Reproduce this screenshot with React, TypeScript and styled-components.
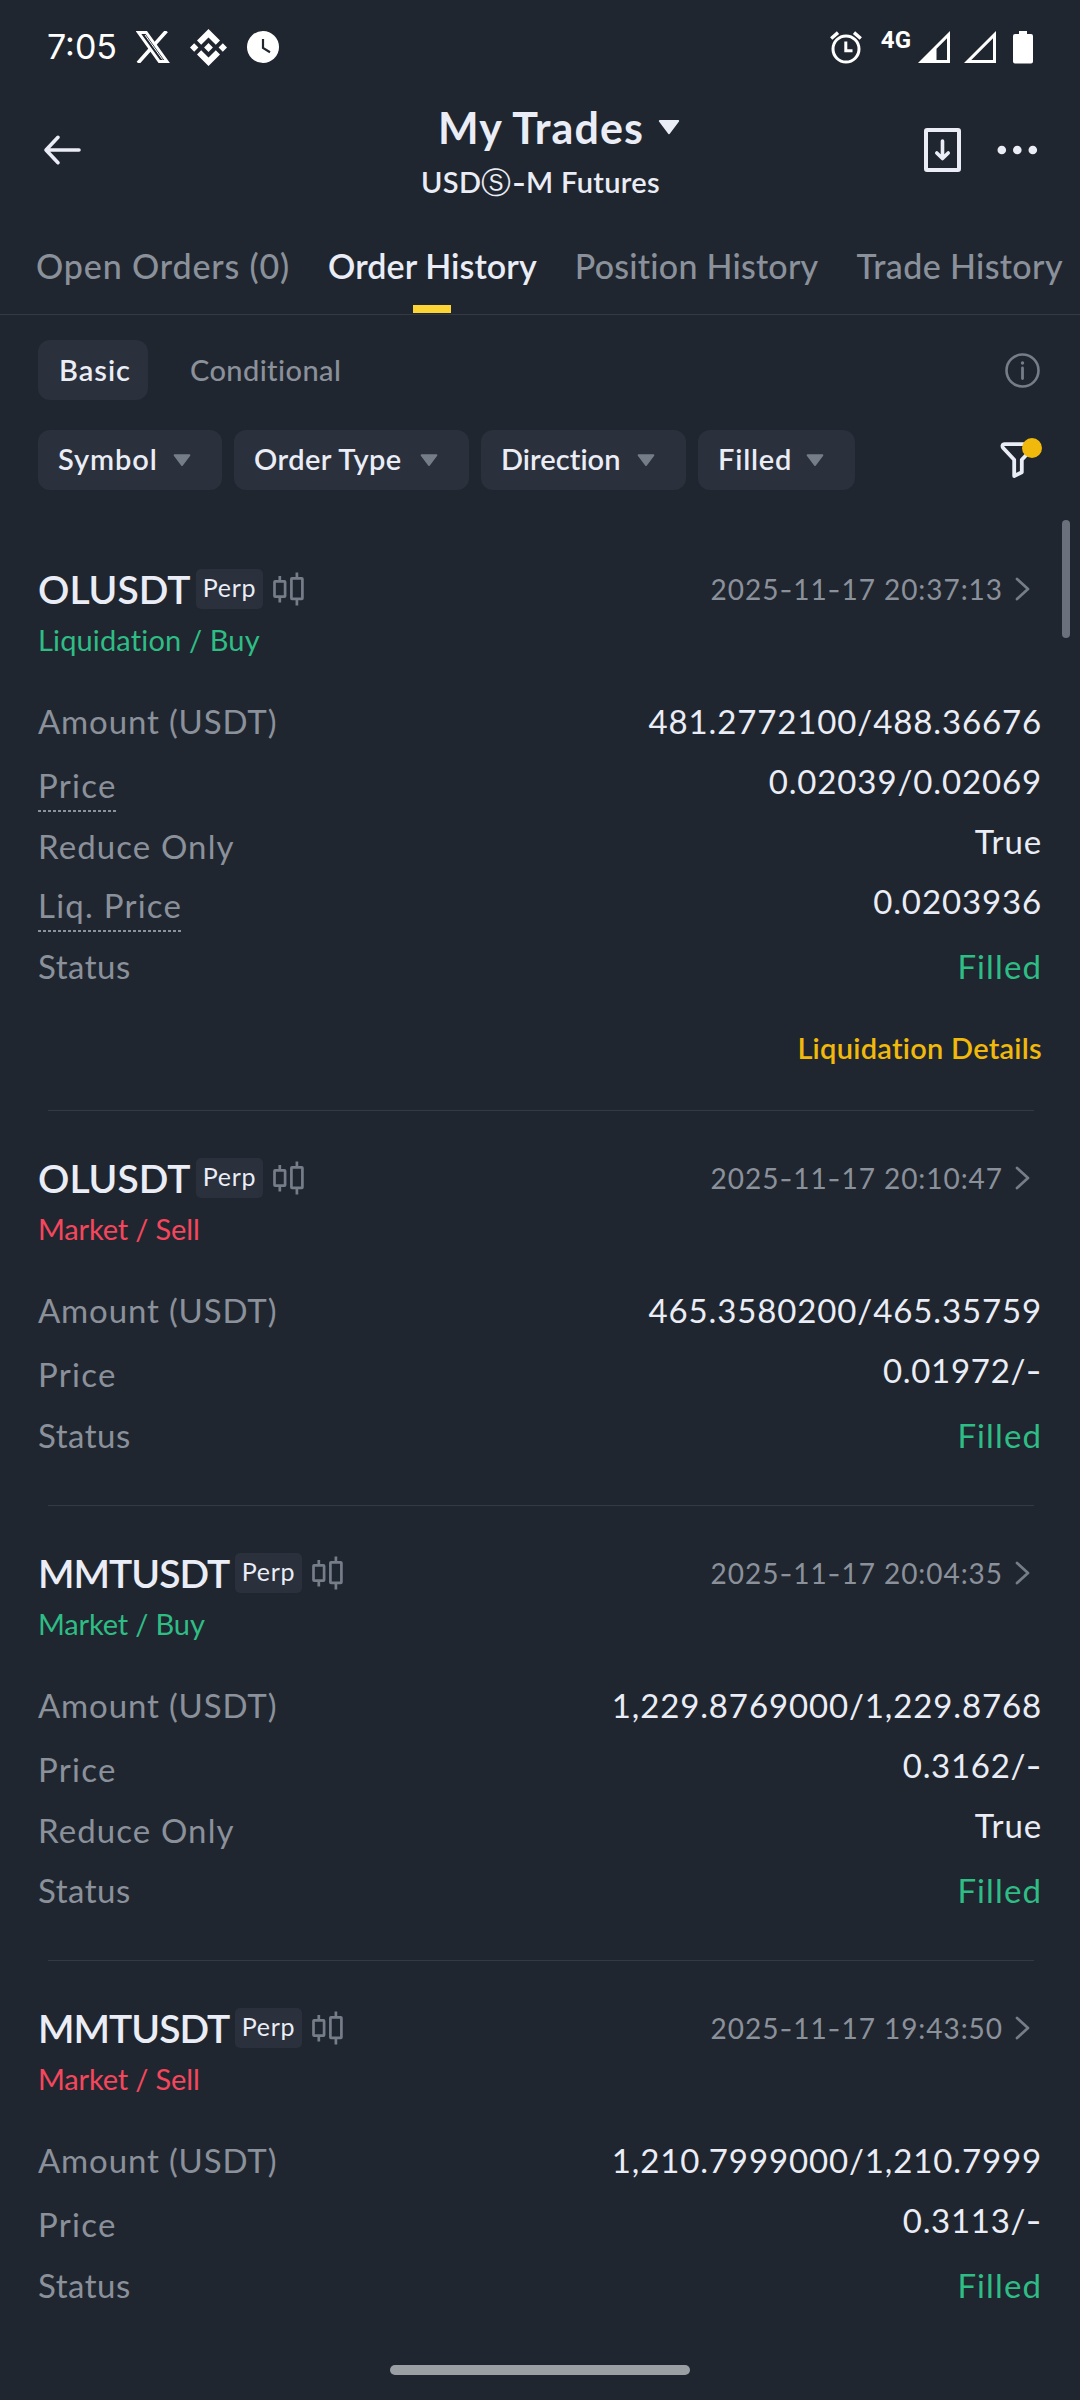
import React from "react";
import styled, { createGlobalStyle } from "styled-components";

const color = {
  bg: "#20262f",
  panel: "#2a303c",
  text: "#eaedf6",
  muted: "#8b919b",
  icon: "#757d89",
  line: "#343943",
  green: "#2ebd85",
  red: "#f6465d",
  yellow: "#f0b90b",
};

const GlobalStyle = createGlobalStyle`
  *, *::before, *::after { box-sizing: border-box; }
  body {
    margin: 0;
    background: ${color.bg};
    font-family: Lato, "Open Sans", sans-serif;
    color: ${color.text};
  }
  svg { display: block; flex: none; }
`;

const Screen = styled.div`
  width: 1080px;
  height: 2400px;
  overflow: hidden;
  display: flex;
  flex-direction: column;
  background: ${color.bg};
`;

/* ---------- status bar ---------- */

const StatusBar = styled.div`
  height: 94px;
  flex: none;
  display: flex;
  align-items: center;
  justify-content: space-between;
  padding: 0 47px 0 47px;
  color: #fff;
`;

const StatusLeft = styled.div`
  display: flex;
  align-items: center;
`;

const StatusRight = styled.div`
  display: flex;
  align-items: flex-start;
  height: 32px;
`;

const Clock = styled.span`
  width: 89px;
  font: 400 34px/40px Inter, sans-serif;
`;

const IconSlot = styled.span<{ $gap: number }>`
  margin-left: ${(p) => p.$gap}px;
`;

const NetworkType = styled.span`
  margin-left: 19px;
  font: 700 24px/18px Roboto, sans-serif;
`;

/* ---------- header ---------- */

const Header = styled.header`
  height: 111px;
  flex: none;
  display: grid;
  grid-template-columns: 1fr auto 1fr;
  align-items: center;
  padding: 0 42px 0 43px;
`;

const Heading = styled.div`
  align-self: start;
  padding-top: 9px;
  display: flex;
  flex-direction: column;
  align-items: center;
`;

const TitleRow = styled.div`
  display: flex;
  align-items: center;
  gap: 14px;
  padding-left: 37px;
  & > svg { margin-bottom: 2px; }
`;

const Title = styled.h1`
  margin: 0;
  font-size: 43px;
  line-height: 50px;
  font-weight: 700;
  letter-spacing: 1.1px;
`;

const Subtitle = styled.div`
  margin-top: 9px;
  font-size: 29px;
  line-height: 40px;
  font-weight: 600;
  letter-spacing: 0.3px;
  white-space: nowrap;
`;

const CircledS = styled.span`
  font-family: "DejaVu Sans", sans-serif;
  font-weight: 400;
  font-size: 30px;
  line-height: 1px;
  letter-spacing: 1px;
`;

const Dash = styled.span`
  font-family: Inter, sans-serif;
  line-height: 1px;
`;

const HeaderActions = styled.div`
  display: flex;
  align-items: center;
  justify-content: flex-end;
  gap: 36px;
`;

/* ---------- tabs ---------- */

const Tabs = styled.nav`
  height: 110px;
  flex: none;
  display: flex;
  align-items: flex-start;
  gap: 38px;
  padding: 41px 0 0 36px;
  border-bottom: 1px solid ${color.line};
`;

const Tab = styled.div<{ $active?: boolean; $track: number }>`
  display: flex;
  flex-direction: column;
  align-items: center;
  gap: 19px;
  font-size: 34px;
  line-height: 40px;
  font-weight: ${(p) => (p.$active ? 600 : 500)};
  letter-spacing: ${(p) => p.$track}px;
  white-space: nowrap;
  color: ${(p) => (p.$active ? color.text : color.muted)};
  &::after {
    content: "";
    width: 38px;
    height: 8px;
    background: ${(p) => (p.$active ? "#fcd535" : "transparent")};
  }
`;

/* ---------- filters ---------- */

const ModeRow = styled.div`
  flex: none;
  height: 60px;
  margin-top: 25px;
  padding: 0 40px 0 38px;
  display: flex;
  align-items: center;
  justify-content: space-between;
`;

const ModeGroup = styled.div`
  display: flex;
`;

const Mode = styled.div<{ $active?: boolean }>`
  height: 60px;
  min-width: 110px;
  padding-left: ${(p) => (p.$active ? 21 : 42)}px;
  border-radius: 12px;
  font-size: 29px;
  line-height: 60px;
  font-weight: ${(p) => (p.$active ? 600 : 500)};
  letter-spacing: ${(p) => (p.$active ? 1.0 : 0.4)}px;
  color: ${(p) => (p.$active ? color.text : color.muted)};
  background: ${(p) => (p.$active ? color.panel : "transparent")};
`;

const FilterRow = styled.div`
  flex: none;
  height: 60px;
  margin-top: 30px;
  padding: 0 38px;
  display: flex;
  align-items: center;
  justify-content: space-between;
`;

const ChipGroup = styled.div`
  display: flex;
  gap: 12px;
`;

const Chip = styled.div<{ $width: number; $track: number }>`
  width: ${(p) => p.$width}px;
  height: 60px;
  padding: 0 31px 0 20px;
  border-radius: 12px;
  display: flex;
  align-items: center;
  justify-content: space-between;
  font-size: 29px;
  line-height: 56px;
  font-weight: 600;
  letter-spacing: ${(p) => p.$track}px;
  white-space: nowrap;
  background: ${color.panel};
  & > span { padding-bottom: 3px; }
`;

const FilterButton = styled.div`
  position: relative;
  width: 42px;
  height: 42px;
  margin-bottom: 2px;
  &::after {
    content: "";
    position: absolute;
    top: 0;
    right: 0;
    width: 20px;
    height: 20px;
    border-radius: 50%;
    background: ${color.yellow};
  }
`;

/* ---------- orders ---------- */

const OrderList = styled.main`
  position: relative;
  flex: 1;
  padding-top: 32px;
`;

const ScrollThumb = styled.div`
  position: absolute;
  top: 30px;
  right: 10px;
  width: 8px;
  height: 118px;
  border-radius: 4px;
  background: #6a717d;
`;

const Card = styled.section`
  padding: 43px 38px 50px 38px;
`;

const Divider = styled.hr`
  height: 1px;
  margin: 0 46px 0 48px;
  border: 0;
  background: ${color.line};
`;

const CardHead = styled.div`
  display: flex;
  align-items: center;
  height: 48px;
`;

const Symbol = styled.h2<{ $width: number; $track: number }>`
  margin: 0;
  width: ${(p) => p.$width}px;
  font-size: 39px;
  line-height: 48px;
  font-weight: 600;
  letter-spacing: ${(p) => p.$track}px;
  white-space: nowrap;
`;

const Badge = styled.span`
  width: 67px;
  height: 40px;
  margin-right: 10px;
  border-radius: 5px;
  text-align: center;
  font-size: 25px;
  line-height: 36px;
  letter-spacing: 0.7px;
  background: ${color.panel};
`;

const Stamp = styled.div`
  margin-left: auto;
  padding: 0 12px 0 0;
  display: flex;
  align-items: center;
  gap: 12px;
  font-size: 28px;
  line-height: 48px;
  letter-spacing: 0.95px;
  color: ${color.muted};
`;

const Side = styled.div<{ $buy: boolean; $track: number }>`
  margin: 9px 0 43px;
  font-size: 29px;
  line-height: 36px;
  letter-spacing: ${(p) => p.$track}px;
  color: ${(p) => (p.$buy ? color.green : color.red)};
`;

const Row = styled.div<{ $last?: boolean }>`
  display: flex;
  justify-content: space-between;
  align-items: flex-start;
  height: ${(p) => (p.$last ? 40 : 60)}px;
  margin-top: ${(p) => (p.$last ? 5 : 0)}px;
  font-size: 33px;
  line-height: 40px;
`;

const Label = styled.span<{ $drop: number; $hint?: boolean; $track: number }>`
  margin-top: ${(p) => p.$drop}px;
  height: ${(p) => (p.$hint ? 47 : 40)}px;
  letter-spacing: ${(p) => p.$track}px;
  color: ${color.muted};
  background: ${(p) =>
    p.$hint
      ? `repeating-linear-gradient(90deg, ${color.muted} 0 3px, transparent 3px 5px) 0 100% / 100% 2px no-repeat`
      : "none"};
`;

const Value = styled.span<{ $track: number; $green?: boolean }>`
  letter-spacing: ${(p) => p.$track}px;
  color: ${(p) => (p.$green ? color.green : color.text)};
`;

const DetailsLink = styled.a`
  display: block;
  margin: 50px 0 0;
  text-align: right;
  font-size: 29px;
  line-height: 24px;
  font-weight: 600;
  letter-spacing: 0.26px;
  color: ${color.yellow};
`;

const HomeBar = styled.div`
  position: absolute;
  left: 390px;
  bottom: 25px;
  width: 300px;
  height: 10px;
  border-radius: 5px;
  background: #9a9fa4;
`;

/* ---------- icons ---------- */

const XLogo = () => (
  <svg width="34" height="32" viewBox="0 0 34 32" fill="none">
    <path d="M2.5 1.5H10.2L31 30.5H23.3Z" stroke="#fff" strokeWidth="3" />
    <path d="M30.5 0L18.6 13.4M14.2 18.3L2 32" stroke="#fff" strokeWidth="3.6" />
    <path d="M9 4L26.5 28.5" stroke="#fff" strokeWidth="1" />
  </svg>
);

const BinanceLogo = () => (
  <svg width="37" height="37" viewBox="0 0 37 37" fill="#fff">
    <path d="M18.5 0L30 11.5L25.8 15.7L18.5 8.4L11.2 15.7L7 11.5Z" />
    <path d="M18.5 37L30 25.5L25.8 21.3L18.5 28.6L11.2 21.3L7 25.5Z" />
    <path d="M4.2 14.3L8.4 18.5L4.2 22.7L0 18.5ZM32.8 14.3L37 18.5L32.8 22.7L28.6 18.5ZM18.5 14.1L22.9 18.5L18.5 22.9L14.1 18.5Z" />
  </svg>
);

const ClockIcon = () => (
  <svg width="32" height="32" viewBox="0 0 32 32" fill="none">
    <circle cx="16" cy="16" r="16" fill="#fff" />
    <path d="M16 8V17L23 21.2" stroke={color.bg} strokeWidth="2.2" />
  </svg>
);

const AlarmIcon = () => (
  <svg width="32" height="33" viewBox="0 0 32 33" fill="none" stroke="#fff">
    <circle cx="16" cy="18" r="13" strokeWidth="3" />
    <path d="M1.2 7.5L8 1.6M30.8 7.5L24 1.6" strokeWidth="3.4" />
    <path d="M15.8 10.5V19.8H22.5" strokeWidth="3" />
  </svg>
);

const SignalIcon = ({ filled }: { filled?: boolean }) => (
  <svg width="32" height="32" viewBox="0 0 32 32" fill="#fff">
    <path
      fillRule="evenodd"
      d={filled ? "M32 0V32H0ZM29 7.3L18.5 17.8V29H29Z" : "M32 0V32H0ZM29 7.3L7.3 29H29Z"}
    />
  </svg>
);

const BatteryIcon = () => (
  <svg width="20" height="33" viewBox="0 0 20 33" fill="#fff">
    <path d="M6 0H14V3H18Q20 3 20 5V30.5Q20 32.5 18 32.5H2Q0 32.5 0 30.5V5Q0 3 2 3H6Z" />
  </svg>
);

const BackIcon = () => (
  <svg width="40" height="32" viewBox="0 0 40 32" fill="none" stroke={color.text} strokeWidth="3.6" strokeLinecap="round" strokeLinejoin="round">
    <path d="M36 16H3.5M15 3.3L3 16L15 28.7" />
  </svg>
);

const ExportIcon = () => (
  <svg width="37" height="44" viewBox="0 0 37 44" fill="none" stroke={color.text}>
    <rect x="2" y="2" width="33" height="40" rx="1" strokeWidth="4" />
    <path d="M18.5 13V30M12.8 25L18.5 30.5L24.2 25" strokeWidth="3.6" strokeLinecap="round" strokeLinejoin="round" />
  </svg>
);

const MoreIcon = () => (
  <svg width="41" height="10" viewBox="0 0 41 10" fill={color.text}>
    <circle cx="4.8" cy="5" r="4.3" />
    <circle cx="20.3" cy="5" r="4.3" />
    <circle cx="35.8" cy="5" r="4.3" />
  </svg>
);

const Caret = ({ w, h, fill }: { w: number; h: number; fill: string }) => (
  <svg width={w} height={h} viewBox="0 0 22 15">
    <path d="M1.8 1H20.2L11 13.2Z" fill={fill} stroke={fill} strokeWidth="2" strokeLinejoin="round" />
  </svg>
);

const InfoIcon = () => (
  <svg width="35" height="35" viewBox="0 0 35 35" fill="none" stroke={color.icon}>
    <circle cx="17.5" cy="17.5" r="16" strokeWidth="2.6" />
    <path d="M17.5 15V25.5" strokeWidth="2.8" strokeLinecap="round" />
    <circle cx="17.5" cy="10" r="1.7" fill={color.icon} stroke="none" />
  </svg>
);

const FunnelIcon = () => (
  <svg width="42" height="42" viewBox="0 0 42 42" fill="none" stroke={color.text} strokeWidth="3.8" strokeLinejoin="round" strokeLinecap="round">
    <path d="M32 6.2H4.6C2.2 6.2 2 8.6 3.2 10L14.2 21.8V38L21.8 34.2V21.8L32.5 10.5" />
  </svg>
);

const CandlesIcon = () => (
  <svg width="31" height="34" viewBox="0 0 31 34" fill="none" stroke={color.icon} strokeWidth="2.7">
    <rect x="1.5" y="9.3" width="10.6" height="15.4" rx="0.6" />
    <path d="M6.8 4V9M6.8 25V30.5" />
    <rect x="18.4" y="6.3" width="11" height="20.6" rx="0.6" />
    <path d="M23.9 0.5V6M23.9 27.2V33.5" />
  </svg>
);

const Chevron = () => (
  <svg width="15" height="24" viewBox="0 0 15 24" fill="none" stroke={color.icon} strokeWidth="2.7" strokeLinecap="round" strokeLinejoin="round">
    <path d="M2 2L13 12L2 22" />
  </svg>
);

/* ---------- data ---------- */

type Field = { label: string; value: string; hint?: boolean };
type Order = {
  symbol: string;
  kind: string;
  buy: boolean;
  time: string;
  fields: Field[];
  details?: boolean;
};

const orders: Order[] = [
  {
    symbol: "OLUSDT",
    kind: "Liquidation / Buy",
    buy: true,
    time: "2025-11-17 20:37:13",
    fields: [
      { label: "Amount (USDT)", value: "481.2772100/488.36676" },
      { label: "Price", value: "0.02039/0.02069", hint: true },
      { label: "Reduce Only", value: "True" },
      { label: "Liq. Price", value: "0.0203936", hint: true },
      { label: "Status", value: "Filled" },
    ],
    details: true,
  },
  {
    symbol: "OLUSDT",
    kind: "Market / Sell",
    buy: false,
    time: "2025-11-17 20:10:47",
    fields: [
      { label: "Amount (USDT)", value: "465.3580200/465.35759" },
      { label: "Price", value: "0.01972/-" },
      { label: "Status", value: "Filled" },
    ],
  },
  {
    symbol: "MMTUSDT",
    kind: "Market / Buy",
    buy: true,
    time: "2025-11-17 20:04:35",
    fields: [
      { label: "Amount (USDT)", value: "1,229.8769000/1,229.8768" },
      { label: "Price", value: "0.3162/-" },
      { label: "Reduce Only", value: "True" },
      { label: "Status", value: "Filled" },
    ],
  },
  {
    symbol: "MMTUSDT",
    kind: "Market / Sell",
    buy: false,
    time: "2025-11-17 19:43:50",
    fields: [
      { label: "Amount (USDT)", value: "1,210.7999000/1,210.7999" },
      { label: "Price", value: "0.3113/-" },
      { label: "Status", value: "Filled" },
    ],
  },
];

const labelTrack: Record<string, number> = {
  "Amount (USDT)": 0.85,
  Price: 1.25,
  "Reduce Only": 1.1,
  "Liq. Price": 1.23,
  Status: 0.5,
};

const chips = [
  { text: "Symbol", width: 184, track: 0.9 },
  { text: "Order Type", width: 235, track: 0.45 },
  { text: "Direction", width: 205, track: 0.05 },
  { text: "Filled", width: 157, track: 0.8 },
];

/* Hyphens use the wider dash of the secondary face. */
const Dashed = ({ text }: { text: string }) => (
  <span>
    {text.split("-").map((part, i) => (
      <React.Fragment key={i}>
        {i > 0 && <Dash>-</Dash>}
        {part}
      </React.Fragment>
    ))}
  </span>
);

const valueTrack = (f: Field) => {
  if (f.label === "Status") return 1.1;
  return f.value.endsWith("-") ? 0.7 : 0.88;
};

const labelDrop = (label: string) => {
  if (label === "Reduce Only") return 5;
  return label.endsWith("Price") ? 4 : 0;
};

const OrderCard = ({ order }: { order: Order }) => {
  const wide = order.symbol.length > 6;
  return (
    <Card>
      <CardHead>
        <Symbol $width={wide ? 197 : 158} $track={wide ? -1 : 0}>{order.symbol}</Symbol>
        <Badge>Perp</Badge>
        <CandlesIcon />
        <Stamp>
          <Dashed text={order.time} />
          <Chevron />
        </Stamp>
      </CardHead>
      <Side $buy={order.buy} $track={order.kind.startsWith("Market") ? -0.15 : 0.15}>{order.kind}</Side>
      {order.fields.map((f) => {
        const status = f.label === "Status";
        return (
          <Row key={f.label} $last={status}>
            <Label $drop={labelDrop(f.label)} $hint={f.hint} $track={labelTrack[f.label]}>
              {f.label}
            </Label>
            <Value $track={valueTrack(f)} $green={status}><Dashed text={f.value} /></Value>
          </Row>
        );
      })}
      {order.details && <DetailsLink>Liquidation Details</DetailsLink>}
    </Card>
  );
};

export default function App() {
  return (
    <Screen>
      <GlobalStyle />
      <StatusBar>
        <StatusLeft>
          <Clock>7:05</Clock>
          <XLogo />
          <IconSlot $gap={20}><BinanceLogo /></IconSlot>
          <IconSlot $gap={20}><ClockIcon /></IconSlot>
        </StatusLeft>
        <StatusRight>
          <AlarmIcon />
          <NetworkType>4G</NetworkType>
          <IconSlot $gap={7}><SignalIcon filled /></IconSlot>
          <IconSlot $gap={14}><SignalIcon /></IconSlot>
          <IconSlot $gap={17}><BatteryIcon /></IconSlot>
        </StatusRight>
      </StatusBar>

      <Header>
        <BackIcon />
        <Heading>
          <TitleRow>
            <Title>My Trades</Title>
            <Caret w={22} h={15} fill={color.text} />
          </TitleRow>
          <Subtitle>USD<CircledS>Ⓢ</CircledS><Dashed text="-M Futures" /></Subtitle>
        </Heading>
        <HeaderActions>
          <ExportIcon />
          <MoreIcon />
        </HeaderActions>
      </Header>

      <Tabs>
        <Tab $track={0.85}>Open Orders (0)</Tab>
        <Tab $active $track={0.08}>Order History</Tab>
        <Tab $track={0.22}>Position History</Tab>
        <Tab $track={0.35}>Trade History</Tab>
      </Tabs>

      <ModeRow>
        <ModeGroup>
          <Mode $active>Basic</Mode>
          <Mode>Conditional</Mode>
        </ModeGroup>
        <InfoIcon />
      </ModeRow>

      <FilterRow>
        <ChipGroup>
          {chips.map((c) => (
            <Chip key={c.text} $width={c.width} $track={c.track}>
              <span>{c.text}</span>
              <Caret w={18} h={13} fill={color.icon} />
            </Chip>
          ))}
        </ChipGroup>
        <FilterButton><FunnelIcon /></FilterButton>
      </FilterRow>

      <OrderList>
        <ScrollThumb />
        {orders.map((o, i) => (
          <React.Fragment key={o.time}>
            {i > 0 && <Divider />}
            <OrderCard order={o} />
          </React.Fragment>
        ))}
        <HomeBar />
      </OrderList>
    </Screen>
  );
}
